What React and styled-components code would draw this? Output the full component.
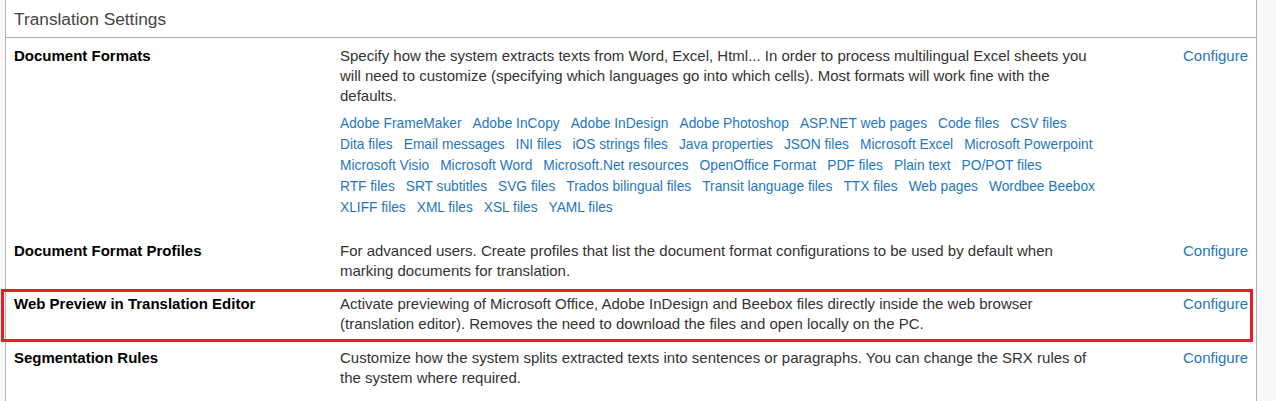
import React from "react";
import styled, { createGlobalStyle } from "styled-components";

const Global = createGlobalStyle`
  html, body { margin: 0; padding: 0; background: #f8f8f8; }
  body { font-family: "Liberation Sans", Arial, sans-serif; font-size: 15px; color: #333; }
`;

const Panel = styled.section`
  margin-left: 5px;
  width: 1252px;
  box-sizing: border-box;
  background: #fff;
  border-left: 1px solid #b4b4b4;
  border-right: 1px solid #b4b4b4;
  min-height: 401px;
`;

const Header = styled.header`
  height: 38px;
  box-sizing: border-box;
  border-bottom: 1px solid #ababab;
  padding: 2px 8px 0;
  display: flex;
  align-items: center;
  font-size: 17.3px;
  color: #444;
`;

const Row = styled.div`
  position: relative;
  display: grid;
  grid-template-columns: 334px 764px 1fr;
  padding: 8px 0 ${(p) => p.$pb}px;
  line-height: 20px;
`;

const Label = styled.div`
  padding-left: 8px;
  font-weight: bold;
  color: #000;
`;

const Desc = styled.div`
  color: #333;
`;

const Action = styled.div`
  text-align: right;
  padding-right: 8px;
`;

const Link = styled.a`
  color: #1f77c0;
  text-decoration: none;
  cursor: pointer;
`;

const Formats = styled.div`
  display: flex;
  flex-wrap: wrap;
  column-gap: 11px;
  margin-top: 7px;
  line-height: 21px;
  font-size: 13.75px;
`;

const Highlight = styled.div`
  position: absolute;
  top: 3px;
  bottom: -2px;
  left: -5px;
  right: 3px;
  border: 3px solid #ec1c24;
  pointer-events: none;
`;

const formats = [
  "Adobe FrameMaker", "Adobe InCopy", "Adobe InDesign", "Adobe Photoshop", "ASP.NET web pages",
  "Code files", "CSV files", "Dita files", "Email messages", "INI files", "iOS strings files",
  "Java properties", "JSON files", "Microsoft Excel", "Microsoft Powerpoint", "Microsoft Visio",
  "Microsoft Word", "Microsoft.Net resources", "OpenOffice Format", "PDF files", "Plain text",
  "PO/POT files", "RTF files", "SRT subtitles", "SVG files", "Trados bilingual files",
  "Transit language files", "TTX files", "Web pages", "Wordbee Beebox", "XLIFF files",
  "XML files", "XSL files", "YAML files",
];

const rows = [
  {
    label: "Document Formats",
    desc: "Specify how the system extracts texts from Word, Excel, Html... In order to process multilingual Excel sheets you will need to customize (specifying which languages go into which cells). Most formats will work fine with the defaults.",
    formats: true,
    pb: 15,
  },
  {
    label: "Document Format Profiles",
    desc: "For advanced users. Create profiles that list the document format configurations to be used by default when marking documents for translation.",
    pb: 5,
  },
  {
    label: "Web Preview in Translation Editor",
    desc: "Activate previewing of Microsoft Office, Adobe InDesign and Beebox files directly inside the web browser (translation editor). Removes the need to download the files and open locally on the PC.",
    highlight: true,
    pb: 6,
  },
  {
    label: "Segmentation Rules",
    desc: "Customize how the system splits extracted texts into sentences or paragraphs. You can change the SRX rules of the system where required.",
    pb: 5,
  },
];

export default function App() {
  return (
    <>
      <Global />
      <Panel>
        <Header>Translation Settings</Header>
        {rows.map((r) => (
          <Row key={r.label} $pb={r.pb}>
            <Label>{r.label}</Label>
            <Desc>
              {r.desc}
              {r.formats && (
                <Formats>
                  {formats.map((f) => (
                    <Link key={f}>{f}</Link>
                  ))}
                </Formats>
              )}
            </Desc>
            <Action>
              <Link>Configure</Link>
            </Action>
            {r.highlight && <Highlight />}
          </Row>
        ))}
      </Panel>
    </>
  );
}
